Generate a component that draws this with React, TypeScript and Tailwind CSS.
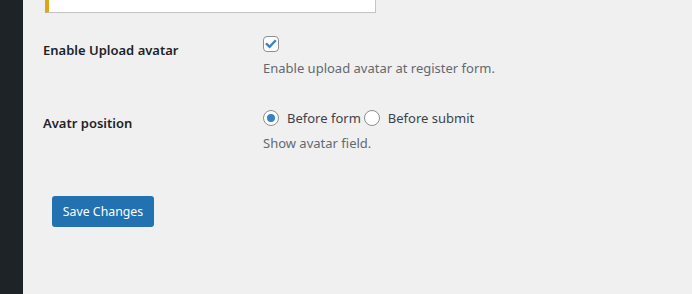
export default function App() {
  return (
    <div className="flex h-[294px] w-[692px] overflow-hidden font-['Noto_Sans',sans-serif] text-[13px] leading-5">
      <div className="w-[23px] shrink-0 bg-[#1d2327]" />
      <div className="flex flex-1 flex-col bg-[#f0f0f1] pl-[20px]">
        <div className="ml-[2px] h-[13px] w-[331px] border-b border-l-4 border-r border-[#c3c4c7] border-l-[#dba617] bg-white" />

        <div className="mt-[23px] flex">
          <div className="w-[220px] pt-[4px] font-semibold text-[#1d2327]">Enable Upload avatar</div>
          <div>
            <span className="flex h-4 w-4 items-center justify-center rounded-[4px] border border-[#8c8f94] bg-white">
              <svg viewBox="0 0 16 16" className="h-[14px] w-[14px]">
                <path d="M3.2 8.2 L6.4 11.2 L12.6 4.6" fill="none" stroke="#3582c4" strokeWidth="2.6" strokeLinecap="square" />
              </svg>
            </span>
            <p className="mt-[6px] text-[#646970]">Enable upload avatar at register form.</p>
          </div>
        </div>

        <div className="mt-[32px] flex">
          <div className="w-[220px] pt-[3px] font-semibold text-[#1d2327]">Avatr position</div>
          <div>
            <div className="flex h-4 items-center text-[#3c434a]">
              <span className="flex h-4 w-4 items-center justify-center rounded-full border border-[#8c8f94] bg-white">
                <span className="h-2 w-2 rounded-full bg-[#3582c4]" />
              </span>
              <span className="ml-[8px]">Before form</span>
              <span className="ml-[3px] h-4 w-4 rounded-full border border-[#8c8f94] bg-white" />
              <span className="ml-[8px]">Before submit</span>
            </div>
            <p className="mt-[7px] text-[#646970]">Show avatar field.</p>
          </div>
        </div>

        <button className="ml-[9px] mt-[43px] h-[31px] w-[102px] rounded-[3px] bg-[#2271b1] text-[12.3px] text-white">
          Save Changes
        </button>
      </div>
    </div>
  )
}
